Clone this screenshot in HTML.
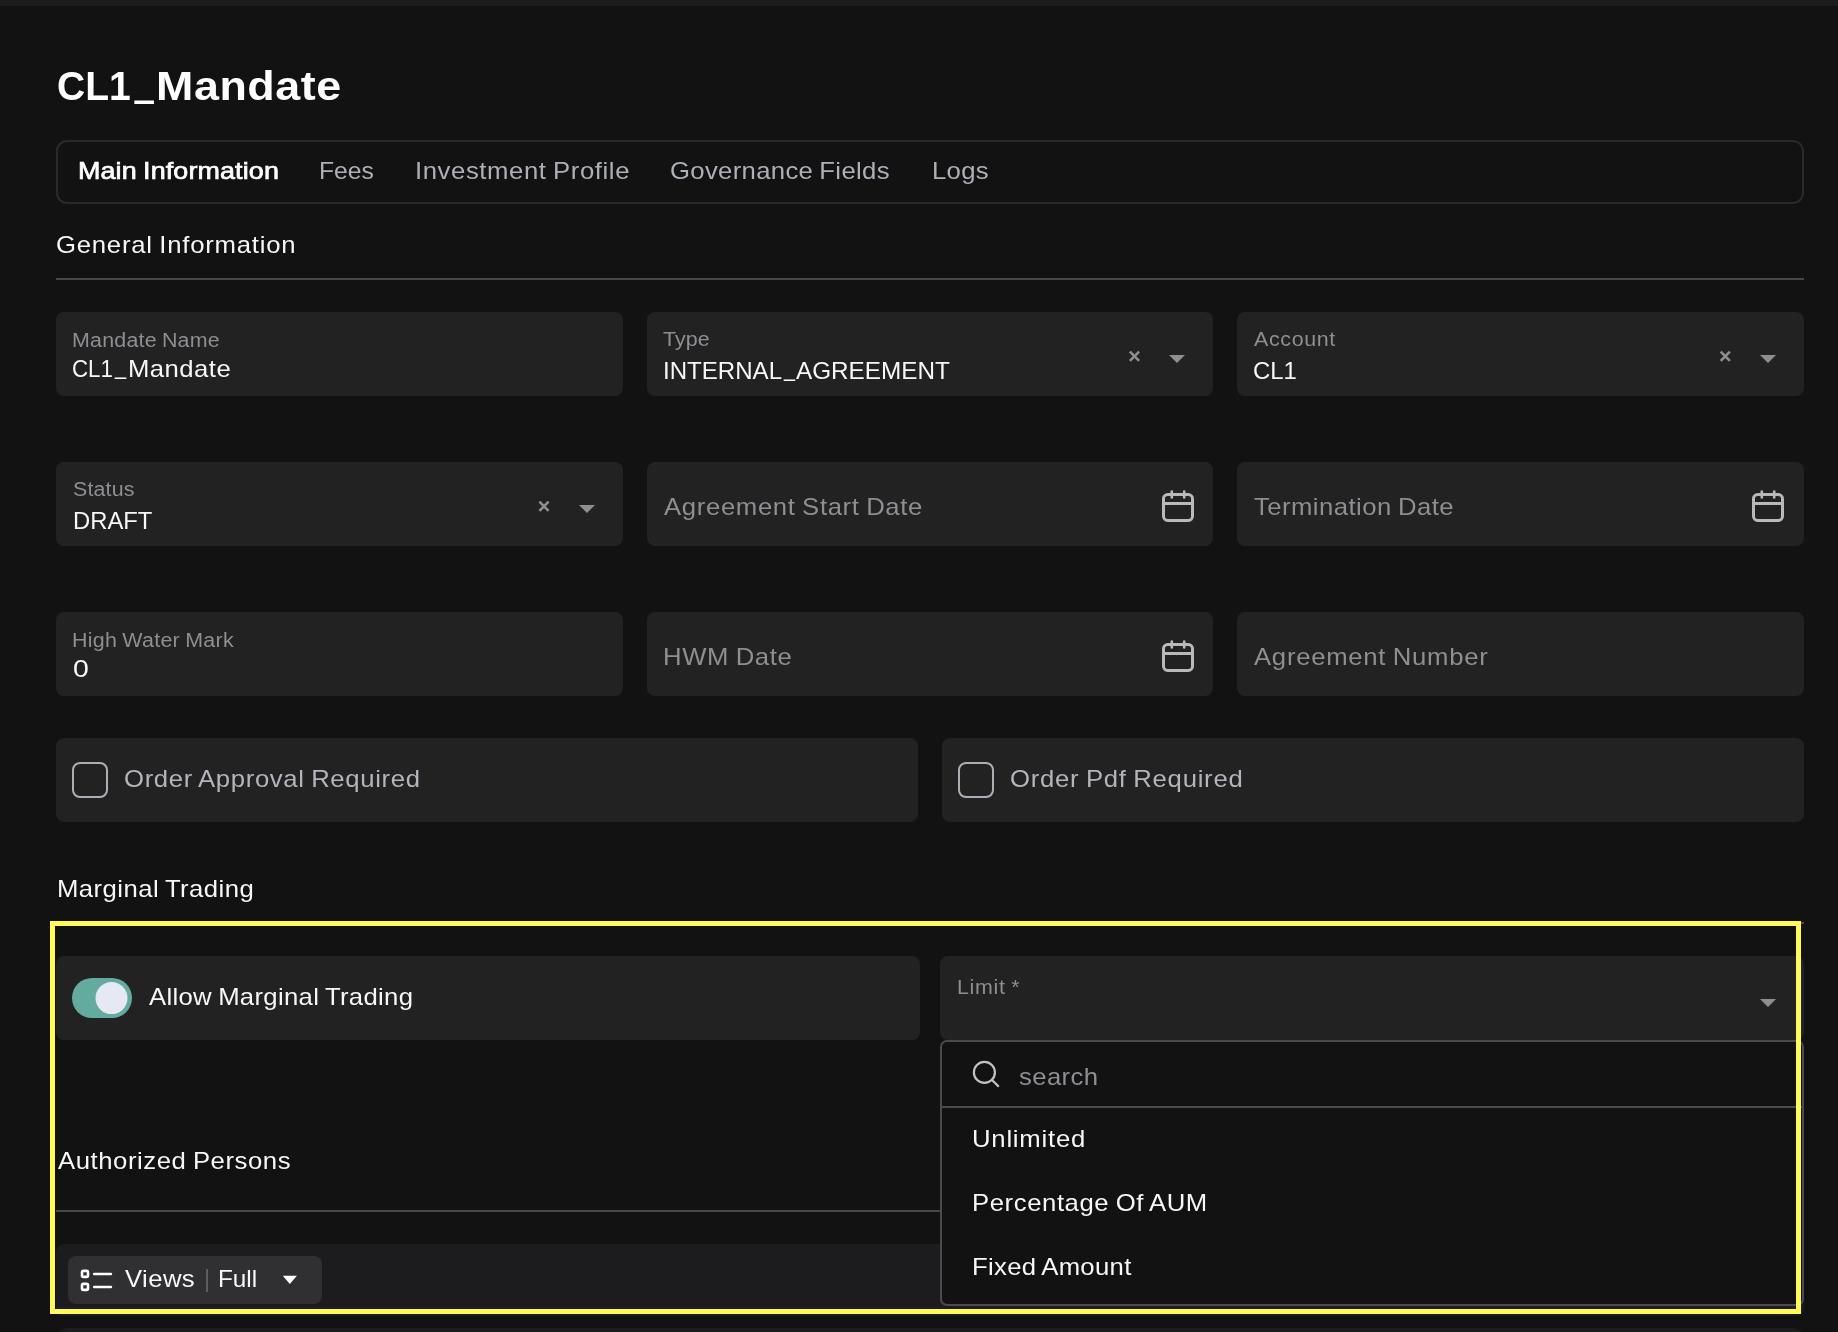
<!DOCTYPE html>
<html lang="en">
<head>
<meta charset="utf-8">
<title>CL1_Mandate</title>
<style>
  html,body{margin:0;padding:0;}
  body{width:1838px;height:1332px;overflow:hidden;background:#121212;position:relative;font-family:"Liberation Sans",sans-serif;}
  .a{position:absolute;box-sizing:border-box;}
  .t{position:absolute;transform-origin:0 0;white-space:nowrap;font-family:"Liberation Sans",sans-serif;display:block;}
  .f{position:absolute;background:#222222;border-radius:8px;}
  .hr{position:absolute;background:#48484b;height:2px;}
  svg{position:absolute;overflow:visible;}
</style>
</head>
<body>
<!-- top strip -->
<div class="a" style="left:0;top:0;width:1838px;height:6px;background:#1c1c1e;"></div>

<!-- tabs box -->
<div class="a" style="left:56px;top:140px;width:1748px;height:64px;border:2px solid #2a2a2b;border-radius:11px;"></div>

<!-- general info divider -->
<div class="hr" style="left:56px;top:278px;width:1748px;"></div>

<!-- row 1 -->
<div class="f" style="left:56px;top:312px;width:567px;height:84px;"></div>
<div class="f" style="left:647px;top:312px;width:566px;height:84px;"></div>
<div class="f" style="left:1237px;top:312px;width:567px;height:84px;"></div>
<!-- row 2 -->
<div class="f" style="left:56px;top:462px;width:567px;height:84px;"></div>
<div class="f" style="left:647px;top:462px;width:566px;height:84px;"></div>
<div class="f" style="left:1237px;top:462px;width:567px;height:84px;"></div>
<!-- row 3 -->
<div class="f" style="left:56px;top:612px;width:567px;height:84px;"></div>
<div class="f" style="left:647px;top:612px;width:566px;height:84px;"></div>
<div class="f" style="left:1237px;top:612px;width:567px;height:84px;"></div>
<!-- checkbox row -->
<div class="f" style="left:56px;top:738px;width:862px;height:84px;"></div>
<div class="f" style="left:942px;top:738px;width:862px;height:84px;"></div>
<div class="a" style="left:72px;top:762px;width:36px;height:36px;border:2px solid #adafb7;border-radius:8px;"></div>
<div class="a" style="left:958px;top:762px;width:36px;height:36px;border:2px solid #adafb7;border-radius:8px;"></div>

<!-- marginal trading divider (hidden under highlight) -->
<div class="hr" style="left:56px;top:922px;width:1748px;"></div>

<!-- toggle row -->
<div class="f" style="left:56px;top:956px;width:864px;height:84px;"></div>
<div class="f" style="left:940px;top:956px;width:864px;height:84px;"></div>
<div class="a" style="left:72px;top:978px;width:60px;height:40px;border-radius:20px;background:#64ab9f;"></div>

<!-- authorized persons divider -->
<div class="hr" style="left:56px;top:1210px;width:886px;height:2px;"></div>

<!-- toolbar -->
<div class="a" style="left:56px;top:1244px;width:1748px;height:72px;background:#1c1c1e;border-radius:8px;"></div>
<div class="a" style="left:68px;top:1256px;width:254px;height:48px;background:#303032;border-radius:8px;"></div>
<div class="a" style="left:206px;top:1269px;width:2px;height:23px;background:#5c5c62;"></div>
<!-- table top (cut off) -->
<div class="a" style="left:56px;top:1328px;width:1748px;height:20px;background:#1c1c1e;border-radius:12px 12px 0 0;"></div>

<!-- dropdown -->
<div class="a" style="left:940px;top:1040px;width:864px;height:266px;background:#121212;border:2px solid #4a4b4e;border-radius:7px;"></div>
<div class="a" style="left:942px;top:1106px;width:860px;height:2px;background:#4a4b4e;"></div>

<!-- ICONS -->
<svg width="1838" height="1332" viewBox="0 0 1838 1332" style="left:0;top:0;">
  <!-- clear x + carets -->
  <g transform="translate(1134.5 356.3)"><path d="M-4.6 -4.6 L4.6 4.6 M4.6 -4.6 L-4.6 4.6" stroke="#8e8e93" stroke-width="2.6" fill="none"/></g><g transform="translate(1177 359)"><path d="M-8 -4 L8 -4 L0 4 Z" fill="#8e8e93"/></g>
  <g transform="translate(1725.3 356.3)"><path d="M-4.6 -4.6 L4.6 4.6 M4.6 -4.6 L-4.6 4.6" stroke="#8e8e93" stroke-width="2.6" fill="none"/></g><g transform="translate(1768 359)"><path d="M-8 -4 L8 -4 L0 4 Z" fill="#8e8e93"/></g>
  <g transform="translate(544 506.3)"><path d="M-4.6 -4.6 L4.6 4.6 M4.6 -4.6 L-4.6 4.6" stroke="#8e8e93" stroke-width="2.6" fill="none"/></g><g transform="translate(587 509)"><path d="M-8 -4 L8 -4 L0 4 Z" fill="#8e8e93"/></g>
  <g transform="translate(1768 1003)"><path d="M-8 -4 L8 -4 L0 4 Z" fill="#8e8e93"/></g>
  <!-- calendars -->
  <g transform="translate(1178 507.5)"><g fill="none" stroke="#b9b9b9"><rect x="-14.5" y="-13" width="29" height="26" rx="4.2" stroke-width="3"/><path d="M-14.5 -4 H14.5" stroke-width="3"/><path d="M-6.2 -16 V-10 M6.2 -16 V-10" stroke-width="2.6" stroke-linecap="round"/></g></g>
  <g transform="translate(1768 507.5)"><g fill="none" stroke="#b9b9b9"><rect x="-14.5" y="-13" width="29" height="26" rx="4.2" stroke-width="3"/><path d="M-14.5 -4 H14.5" stroke-width="3"/><path d="M-6.2 -16 V-10 M6.2 -16 V-10" stroke-width="2.6" stroke-linecap="round"/></g></g>
  <g transform="translate(1178 657.5)"><g fill="none" stroke="#b9b9b9"><rect x="-14.5" y="-13" width="29" height="26" rx="4.2" stroke-width="3"/><path d="M-14.5 -4 H14.5" stroke-width="3"/><path d="M-6.2 -16 V-10 M6.2 -16 V-10" stroke-width="2.6" stroke-linecap="round"/></g></g>
  <!-- toggle knob -->
  <circle cx="111.5" cy="998.1" r="16" fill="#e6e8f4"/>
  <!-- search icon -->
  <g fill="none" stroke="#c2c2c4" stroke-width="2.2" stroke-linecap="round">
    <circle cx="984.4" cy="1072.4" r="10.5"/>
    <path d="M992 1080 L998.2 1086.1"/>
  </g>
  <!-- views icon -->
  <g fill="none" stroke="#ffffff" stroke-width="2.6">
    <rect x="82" y="1270.9" width="6" height="6" rx="1.4"/>
    <rect x="82" y="1283.9" width="6" height="6" rx="1.4"/>
    <path d="M94.2 1274 H110.9 M94.2 1287 H110.9" stroke-linecap="round"/>
  </g>
  <path d="M282.8 1275.8 L296.9 1275.8 L289.85 1284 Z" fill="#ffffff"/>
</svg>

<!-- TEXT -->
<div id="txt" style="position:absolute;left:0;top:0;width:1838px;height:1332px;will-change:transform;">
<span class="t" style="left:56.52px;top:66.00px;font-size:40px;line-height:40px;color:#ffffff;font-weight:700;transform:scaleX(0.9755);">CL1</span>
<span class="t" style="left:156.16px;top:66.00px;font-size:40px;line-height:40px;color:#ffffff;font-weight:700;letter-spacing:0.524px;transform:scaleX(1.1200);">Mandate</span>
<span class="t" style="left:78.27px;top:159.00px;font-size:24px;line-height:24px;color:#ffffff;-webkit-text-stroke:0.7px #ffffff;letter-spacing:0.119px;word-spacing:-1.20px;transform:scaleX(1.1200);">Main Information</span>
<span class="t" style="left:319.37px;top:159.00px;font-size:24px;line-height:24px;color:#aeb0b8;transform:scaleX(1.0295);">Fees</span>
<span class="t" style="left:415.26px;top:159.00px;font-size:24px;line-height:24px;color:#aeb0b8;letter-spacing:0.559px;word-spacing:-1.20px;transform:scaleX(1.0700);">Investment Profile</span>
<span class="t" style="left:670.43px;top:159.00px;font-size:24px;line-height:24px;color:#aeb0b8;letter-spacing:0.305px;word-spacing:-1.20px;transform:scaleX(1.0700);">Governance Fields</span>
<span class="t" style="left:931.73px;top:159.00px;font-size:24px;line-height:24px;color:#aeb0b8;letter-spacing:0.275px;transform:scaleX(1.0700);">Logs</span>
<span class="t" style="left:55.93px;top:233.00px;font-size:24px;line-height:24px;color:#f7f7f7;letter-spacing:0.719px;word-spacing:-1.20px;transform:scaleX(1.0700);">General Information</span>
<span class="t" style="left:72.43px;top:330.00px;font-size:20px;line-height:20px;color:#8e8e93;letter-spacing:0.209px;word-spacing:-1.00px;transform:scaleX(1.0700);">Mandate Name</span>
<span class="t" style="left:72.17px;top:357.00px;font-size:24px;line-height:24px;color:#f7f7f7;transform:scaleX(0.9278);">CL1</span>
<span class="t" style="left:127.53px;top:357.00px;font-size:24px;line-height:24px;color:#f7f7f7;letter-spacing:0.437px;transform:scaleX(1.0700);">Mandate</span>
<span class="t" style="left:662.80px;top:329.00px;font-size:20px;line-height:20px;color:#8e8e93;letter-spacing:0.043px;transform:scaleX(1.0700);">Type</span>
<span class="t" style="left:662.79px;top:359.00px;font-size:24px;line-height:24px;color:#f7f7f7;transform:scaleX(1.0031);">INTERNAL</span>
<span class="t" style="left:795.90px;top:359.00px;font-size:24px;line-height:24px;color:#f7f7f7;transform:scaleX(1.0115);">AGREEMENT</span>
<span class="t" style="left:1253.80px;top:329.00px;font-size:20px;line-height:20px;color:#8e8e93;letter-spacing:0.608px;transform:scaleX(1.0700);">Account</span>
<span class="t" style="left:1252.80px;top:359.00px;font-size:24px;line-height:24px;color:#f7f7f7;transform:scaleX(0.9958);">CL1</span>
<span class="t" style="left:73.10px;top:479.00px;font-size:20px;line-height:20px;color:#8e8e93;letter-spacing:0.137px;transform:scaleX(1.0700);">Status</span>
<span class="t" style="left:72.71px;top:509.00px;font-size:24px;line-height:24px;color:#f7f7f7;transform:scaleX(0.9920);">DRAFT</span>
<span class="t" style="left:663.80px;top:495.00px;font-size:24px;line-height:24px;color:#8e8e93;letter-spacing:0.619px;word-spacing:-1.20px;transform:scaleX(1.0700);">Agreement Start Date</span>
<span class="t" style="left:1253.50px;top:495.00px;font-size:24px;line-height:24px;color:#8e8e93;letter-spacing:0.420px;word-spacing:-1.20px;transform:scaleX(1.0700);">Termination Date</span>
<span class="t" style="left:72.23px;top:630.00px;font-size:20px;line-height:20px;color:#8e8e93;letter-spacing:0.267px;word-spacing:-1.00px;transform:scaleX(1.0700);">High Water Mark</span>
<span class="t" style="left:73.30px;top:657.00px;font-size:24px;line-height:24px;color:#f7f7f7;transform:scaleX(1.1846);">0</span>
<span class="t" style="left:662.73px;top:645.00px;font-size:24px;line-height:24px;color:#8e8e93;letter-spacing:0.610px;word-spacing:-1.20px;transform:scaleX(1.0700);">HWM Date</span>
<span class="t" style="left:1253.80px;top:645.00px;font-size:24px;line-height:24px;color:#8e8e93;letter-spacing:0.685px;word-spacing:-1.20px;transform:scaleX(1.0700);">Agreement Number</span>
<span class="t" style="left:123.53px;top:767.00px;font-size:24px;line-height:24px;color:#b4b5bc;letter-spacing:0.616px;word-spacing:-1.20px;transform:scaleX(1.0700);">Order Approval Required</span>
<span class="t" style="left:1009.93px;top:767.00px;font-size:24px;line-height:24px;color:#b4b5bc;letter-spacing:0.693px;word-spacing:-1.20px;transform:scaleX(1.0700);">Order Pdf Required</span>
<span class="t" style="left:56.73px;top:877.00px;font-size:24px;line-height:24px;color:#f7f7f7;letter-spacing:0.421px;word-spacing:-1.20px;transform:scaleX(1.0700);">Marginal Trading</span>
<span class="t" style="left:148.75px;top:985.00px;font-size:24px;line-height:24px;color:#f7f7f7;letter-spacing:0.301px;word-spacing:-1.20px;transform:scaleX(1.0700);">Allow Marginal Trading</span>
<span class="t" style="left:956.63px;top:977.00px;font-size:20px;line-height:20px;color:#8e8e93;letter-spacing:0.647px;word-spacing:-1.00px;transform:scaleX(1.0700);">Limit *</span>
<span class="t" style="left:1019.00px;top:1065.00px;font-size:24px;line-height:24px;color:#8e8e93;letter-spacing:0.367px;transform:scaleX(1.0700);">search</span>
<span class="t" style="left:971.93px;top:1127.00px;font-size:24px;line-height:24px;color:#f7f7f7;letter-spacing:0.728px;transform:scaleX(1.0700);">Unlimited</span>
<span class="t" style="left:971.93px;top:1191.00px;font-size:24px;line-height:24px;color:#f7f7f7;letter-spacing:0.550px;word-spacing:-1.20px;transform:scaleX(1.0700);">Percentage Of AUM</span>
<span class="t" style="left:971.93px;top:1255.00px;font-size:24px;line-height:24px;color:#f7f7f7;letter-spacing:0.303px;word-spacing:-1.20px;transform:scaleX(1.0700);">Fixed Amount</span>
<span class="t" style="left:57.50px;top:1149.00px;font-size:24px;line-height:24px;color:#f7f7f7;letter-spacing:0.532px;word-spacing:-1.20px;transform:scaleX(1.0700);">Authorized Persons</span>
<span class="t" style="left:124.70px;top:1267.00px;font-size:24px;line-height:24px;color:#f7f7f7;letter-spacing:0.389px;transform:scaleX(1.0700);">Views</span>
<span class="t" style="left:218.49px;top:1267.00px;font-size:24px;line-height:24px;color:#f7f7f7;transform:scaleX(1.0127);">Full</span>
<span class="t" style="left:0;top:0;font-size:40px;line-height:40px;color:#ffffff;font-weight:700;transform:translate(134.75px,16.75px) scale(0.8500,2.2500);">_</span>
<span class="t" style="left:0;top:0;font-size:24px;line-height:24px;color:#f7f7f7;transform:translate(115.03px,354.20px) scale(0.8267,1.0000);">_</span>
<span class="t" style="left:0;top:0;font-size:24px;line-height:24px;color:#f7f7f7;transform:translate(783.92px,356.10px) scale(0.8200,1.0000);">_</span>
</div>

<!-- yellow highlight -->
<div class="a" style="left:50px;top:921px;width:1751px;height:393px;border:5px solid #fffa55;"></div>
</body>
</html>
